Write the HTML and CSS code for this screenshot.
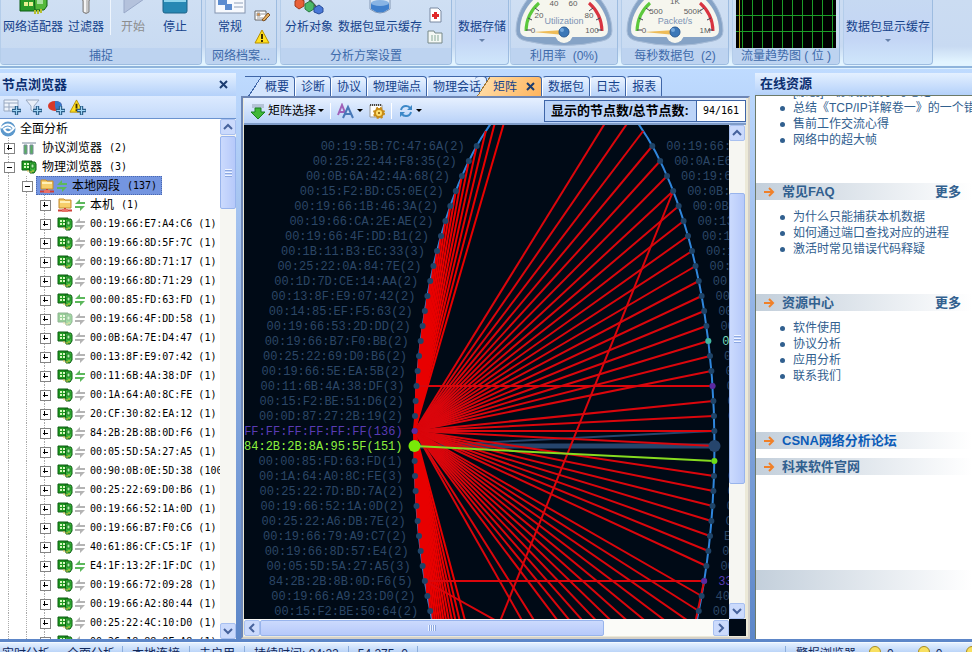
FILE: index.html
```html
<!DOCTYPE html>
<html lang="zh-CN">
<head>
<meta charset="utf-8">
<title>网络分析系统</title>
<link rel="stylesheet" href="styles.css">
</head>
<body>
<svg class="sprites" aria-hidden="true">
  <symbol id="i-nic" viewBox="0 0 16 16">
    <path d="M1 2h10v9H1z" fill="#1f9a1f" stroke="#0c5c12"/>
    <path d="M8 3h6l1 2v6l-2 3H9z" fill="#3cb83c" stroke="#0c5c12"/>
    <path d="M3 4h2v2H3zM3 7h2v2H3zM6 4h2v2H6zM6 7h2v2H6z" fill="#d8f8c0"/>
    <path d="M10 5h3v4h-3z" fill="#b8eeb0" stroke="#117a18"/>
    <path d="M7 11v2M10 12v2M12 11v2" stroke="#e0c040"/>
  </symbol>
  <symbol id="i-arrows" viewBox="0 0 10 14">
    <path d="M0 6l5-5v3h5v2z"/>
    <path d="M10 8l-5 5v-3H0V8z"/>
  </symbol>
  <symbol id="i-folder" viewBox="0 0 16 16">
    <path d="M2 2h5l1 1h6v8H2z" fill="#f6cf6a" stroke="#c48a2c"/>
    <path d="M3 5h10" stroke="#fff0b8" stroke-width="2"/>
    <path d="M1 13.5h14M8 11v3" stroke="#d04038" stroke-width="2"/>
    <path d="M5 12h6v3H5z" fill="#e87068"/>
  </symbol>
  <symbol id="i-plus" viewBox="0 0 8 8">
    <path d="M3 0h2v3h3v2H5v3H3V5H0V3h3z" fill="#9fd4f4" stroke="#2a5f8a"/>
  </symbol>
  <symbol id="i-go" viewBox="0 0 12 12">
    <path d="M1 6h9M6 2l4 4-4 4" fill="none" stroke="#f08028" stroke-width="2"/>
  </symbol>
  <symbol id="i-warn" viewBox="0 0 16 16">
    <path d="M8 1l7 13H1z" fill="#ffe020" stroke="#b89000" stroke-linejoin="round"/>
    <path d="M7 5h2v5H7zM7 11h2v2H7z" fill="#403000"/>
  </symbol>
  <symbol id="i-chev" viewBox="0 0 10 10">
    <path d="M1 7l4-4 4 4" fill="none" stroke="#46629c" stroke-width="2"/>
  </symbol>
  <symbol id="i-x" viewBox="0 0 10 10">
    <path d="M1 1l7 7M8 1L1 8" stroke="#1c3c70" stroke-width="2"/>
  </symbol>
  <symbol id="gauge-face" viewBox="0 0 98 47">
    <path d="M1 31C1 14 10 0 20-8H78C88 0 97 14 97 31Q97 39 87 41Q49 50 11 41Q1 39 1 31Z" fill="#86a3c6" stroke="#a8bdd8"/>
    <path d="M5 30C5 16 13 3 23-4H75C85 3 93 16 93 30Q93 36 86 37H12Q5 36 5 30Z" fill="#f6f6ee"/>
    <path d="M11 31A38 38 0 0 1 24 3" fill="none" stroke="#5cc83c" stroke-width="3"/>
    <path d="M74 3A38 38 0 0 1 87 31" fill="none" stroke="#d83440" stroke-width="3"/>
    <path d="M11 30h5M13 18l4 2M20 8l4 3M87 30h-5M85 18l-4 2M78 8l-4 3" stroke="#445" stroke-width="1"/>
    <circle cx="49" cy="34" r="9" fill="#f6f6ee"/>
    <path d="M18 32l31-2v5z" fill="#eebc58"/>
    <circle cx="49" cy="32" r="5" fill="#3c78b8" stroke="#2a5a94"/>
    <circle cx="47" cy="30" r="2" fill="#74a8dc"/>
  </symbol>
</svg>

<header class="ribbon">
  <section class="group g-capture">
    <div class="tools">
      <button class="tool"><svg width="32" height="32" viewBox="0 0 32 32"><path d="M3 2h20v26H3z" fill="#2a9a28" stroke="#0c5c12"/><path d="M17 4h10l3 4v15l-3 4H18z" fill="#55b83c" stroke="#0c5c12"/><path d="M7 19h4v4H7zM12 19h4v4h-4zM7 13h4v4H7z" fill="#e8f090"/><path d="M18 27v4M21 27v4M24 26v4" stroke="#b8c030" stroke-width="2"/><path d="M20 12h6v9h-6z" fill="#a8e0a0"/></svg>网络适配器</button>
      <button class="tool"><svg width="32" height="32" viewBox="0 0 32 32"><path d="M3 2h26L19 18v11q-3 3-6 0V18z" fill="#c8c8c8" stroke="#808080"/><path d="M15 17v12" stroke="#f4f4f4" stroke-width="2"/></svg>过滤器</button>
      <span class="divider"></span>
      <button class="tool off"><svg width="32" height="32" viewBox="0 0 32 32"><path d="M7 0v30L30 14z" fill="#b4c2dc" stroke="#98a8c8"/></svg>开始</button>
      <button class="tool"><svg width="32" height="32" viewBox="0 0 32 32"><rect x="4" y="4" width="24" height="26" rx="2" fill="#2788b4" stroke="#1c6288"/><path d="M5 5h22v14H5z" fill="#8fd4ec"/></svg>停止</button>
    </div>
    <h2>捕捉</h2>
  </section>
  <section class="group g-profile">
    <div class="tools">
      <button class="tool"><svg width="32" height="32" viewBox="0 0 32 32"><rect x="1" y="1" width="30" height="29" fill="#f6f9fe" stroke="#8494b0"/><path d="M4 16h9v6H4zM11 21h7v6h-7z" fill="#5c8cd0"/><path d="M20 16h9M20 20h9M20 24h9" stroke="#90a0b8"/></svg>常规</button>
      <div class="stack">
        <button aria-label="编辑"><svg width="16" height="16" viewBox="0 0 16 16"><path d="M1 4h11v9H1z" fill="#fff" stroke="#666"/><path d="M3 6h3v3H3zM7 7h4M3 11h6" fill="#e09040" stroke="#999"/><path d="M8 13l6-7 2 2-6 6z" fill="#e4b060" stroke="#805020"/></svg></button>
        <button aria-label="警报"><svg width="16" height="16"><use href="#i-warn"/></svg></button>
      </div>
    </div>
    <h2>网络档案...</h2>
  </section>
  <section class="group g-settings">
    <div class="tools">
      <button class="tool"><svg width="32" height="32" viewBox="0 0 32 32"><path d="M8 19L24 5M24 25L8 7" stroke="#555" stroke-width="2"/><path d="M2 18l5-3 4 3v5l-5 3-4-3z" fill="#e86038" stroke="#a03818"/><path d="M12 21l5-3 4 3v5l-5 3-4-3z" fill="#4cb868" stroke="#287840"/><path d="M21 25l5-3 4 3v4l-4 2-5-2z" fill="#4878d8" stroke="#284c98"/><path d="M14 8l5-3 4 3v5l-5 3-4-3z" fill="#e04848" stroke="#902020"/></svg>分析对象</button>
      <button class="tool"><svg width="32" height="32" viewBox="0 0 32 32"><path d="M6 2v24q10 8 20 0V2z" fill="#d8e6f4" stroke="#8498b4"/><path d="M7 20v6q9 7 18 0v-6z" fill="#4080cc"/><ellipse cx="16" cy="20" rx="9" ry="3" fill="#88b4e4"/></svg>数据包显示缓存</button>
      <div class="stack">
        <button aria-label="诊断设置"><svg width="16" height="16" viewBox="0 0 16 16"><path d="M3 1h8l3 3v11H3z" fill="#fff" stroke="#7888a0"/><path d="M7 5h3v2h2v3h-2v2H7v-2H5V7h2z" fill="#e02828"/></svg></button>
        <button aria-label="视图"><svg width="16" height="16" viewBox="0 0 16 16"><path d="M1 2h6l1 2h7v10H1z" fill="#f4f8f4" stroke="#788"/><path d="M4 7h9M4 9h9M4 11h9" stroke="#8a9" stroke-dasharray="2 1"/></svg></button>
      </div>
    </div>
    <h2>分析方案设置</h2>
  </section>
  <button class="group big g-store"><span>数据存储</span><i class="caret"></i></button>
  <section class="group g-meter">
    <svg class="gauge" width="98" height="47" viewBox="0 0 98 47"><use href="#gauge-face"/><text x="39" y="6">40</text><text x="58" y="6">60</text><text x="24" y="18">20</text><text x="74" y="18">80</text><text x="18" y="33">0</text><text x="77" y="33">100</text><text class="name" x="49" y="24">Utilization</text></svg>
    <h2>利用率&nbsp; (0%)</h2>
  </section>
  <section class="group g-meter">
    <svg class="gauge" width="98" height="47" viewBox="0 0 98 47"><use href="#gauge-face"/><text x="49" y="4">1K</text><text x="30" y="14">500</text><text x="67" y="14">500K</text><text x="18" y="33">0</text><text x="79" y="33">1M</text><text class="name" x="49" y="24">Packet/s</text></svg>
    <h2>每秒数据包&nbsp; (2)</h2>
  </section>
  <section class="group g-meter">
    <svg class="trend" width="100" height="48" viewBox="0 0 100 48"><path d="M0 0h100v48H0z" fill="#000"/><path d="M0 15.5h100M0 31.5h100M16.500 0v48M26.500 0v48M36.500 0v48M46.500 0v48M56.500 0v48M66.500 0v48M76.500 0v48M86.500 0v48M96.500 0v48M6.500 0v48" stroke="#1c9c28"/><path d="M3.500 0v48" stroke="#b8a020"/></svg>
    <h2>流量趋势图 ( 位 )</h2>
  </section>
  <button class="group big g-buffer"><span>数据包显示缓存</span><i class="caret"></i></button>
</header>

<main class="work">
  <aside class="panel nodes">
    <div class="head"><h1>节点浏览器</h1><button aria-label="关闭"><svg width="10" height="10"><use href="#i-x"/></svg></button></div>
    <div class="bar">
      <button aria-label="添加图表"><svg width="18" height="16" viewBox="0 0 18 16"><path d="M1 1h14v11H1zM1 4h14M6 4v8M1 8h14" fill="#eef4fc" stroke="#98a8c0"/><use href="#i-plus" x="9" y="7" width="9" height="9"/></svg></button>
      <button aria-label="添加过滤器"><svg width="18" height="16" viewBox="0 0 18 16"><path d="M1 1h13L9 7v6l-3-2V7z" fill="#e8eef8" stroke="#98a8c0"/><use href="#i-plus" x="8" y="7" width="9" height="9"/></svg></button>
      <button aria-label="添加图形"><svg width="18" height="16" viewBox="0 0 18 16"><ellipse cx="8" cy="7" rx="7" ry="5" fill="#d83828"/><path d="M8 7V2q7 0 7 5 0 5-6 5z" fill="#3878c8"/><use href="#i-plus" x="9" y="7" width="9" height="9"/></svg></button>
      <button aria-label="添加警报"><svg width="18" height="16" viewBox="0 0 18 16"><use href="#i-warn" width="15" height="15"/><use href="#i-plus" x="8" y="7" width="9" height="9"/></svg></button>
    </div>
    <div class="scroll">
      <ul class="tree" id="tree">
        <li class="root"><svg width="16" height="16" viewBox="0 0 16 16"><circle cx="8" cy="8" r="7.500" fill="#5c98cc"/><path d="M1 7q7-7 13 0-6 8-10 1 4-3 7 0" fill="none" stroke="#fff" stroke-width="2"/></svg>全面分析</li>
        <li><b class="box">+</b><svg class="ic" width="16" height="16" viewBox="0 0 16 16"><path d="M1 3h14M3 5h3v9H3zM9 5h3v9H9z" fill="#58b060" stroke="#789"/></svg><span>协议浏览器</span><code>(2)</code></li>
        <li><b class="box">-</b><svg class="ic" width="16" height="16"><use href="#i-nic"/></svg><span>物理浏览器</span><code>(3)</code></li>
        <li><i class="guide"></i><b class="box">-</b><span class="chosen"><svg width="16" height="16"><use href="#i-folder"/></svg><svg class="low" width="10" height="14"><use href="#i-arrows"/></svg><span>本地网段</span><code>(137)</code></span></li>
        <li><i class="guide"></i><i class="guide"></i><b class="box">+</b><svg class="ic" width="16" height="16"><use href="#i-folder"/></svg><svg class="ar both" width="10" height="14"><use href="#i-arrows"/></svg><span>本机</span><code>(1)</code></li>
      </ul>
      <div class="vbar tree-bar"><button aria-label="向上"><svg width="10" height="10"><use href="#i-chev"/></svg></button><div class="track"><i class="thumb"></i></div><button class="flip" aria-label="向下"><svg width="10" height="10"><use href="#i-chev"/></svg></button></div>
    </div>
  </aside>

  <section class="matrix">
    <nav class="tabs">
      <button class="first">概要</button><button>诊断</button><button>协议</button><button>物理端点</button><button>物理会话</button><button class="on">矩阵<svg width="10" height="10"><use href="#i-x"/></svg></button><button>数据包</button><button>日志</button><button>报表</button>
    </nav>
    <div class="frame">
      <div class="toolbar">
        <button><svg width="16" height="16" viewBox="0 0 16 16"><path d="M2 2h12M2 4h12" stroke="#90a0b0"/><path d="M5 5h6v4h4l-7 7-7-7h4z" fill="#40b838" stroke="#188020"/></svg>矩阵选择<i class="caret"></i></button>
        <span class="sep"></span>
        <button aria-label="字体"><svg width="18" height="16" viewBox="0 0 18 16"><path d="M1 12L5 2l4 10M2 9h6" fill="none" stroke="#a060b8" stroke-width="2"/><path d="M6 15l5-11 5 11M8 11h7" fill="none" stroke="#4878b8" stroke-width="2"/></svg><i class="caret"></i></button>
        <button aria-label="设置"><svg width="16" height="16" viewBox="0 0 16 16"><path d="M1 2h12v12H1z" fill="#fff" stroke="#999"/><path d="M1 2h12" stroke="#444" stroke-width="2" stroke-dasharray="1 1"/><circle cx="10" cy="10" r="4" fill="#ffe070" stroke="#c88c18" stroke-width="2" /><circle cx="10" cy="10" r="5" fill="none" stroke="#c88c18" stroke-width="2" stroke-dasharray="2 2"/><circle cx="10" cy="10" r="1" fill="#805000"/></svg></button>
        <span class="sep"></span>
        <button aria-label="刷新"><svg width="16" height="16" viewBox="0 0 16 16"><path d="M3 7q1-4 5-4 3 0 4 2M13 9q-1 4-5 4-3 0-4-2" fill="none" stroke="#3c88c8" stroke-width="2"/><path d="M14 2v5H9zM2 14V9h5z" fill="#3c88c8"/></svg><i class="caret"></i></button>
        <label class="count"><b>显示的节点数/总节点数:</b><output>94/161</output></label>
      </div>
      <div class="view">
        <svg id="plot" class="plot" role="img" aria-label="矩阵"></svg>
        <div class="vbar plot-bar"><button aria-label="向上"><svg width="10" height="10"><use href="#i-chev"/></svg></button><div class="track"><i class="thumb"></i></div><button class="flip" aria-label="向下"><svg width="10" height="10"><use href="#i-chev"/></svg></button></div>
        <div class="hbar"><button class="left" aria-label="向左"><svg width="10" height="10"><use href="#i-chev"/></svg></button><div class="track"><i class="thumb"></i></div><button class="right" aria-label="向右"><svg width="10" height="10"><use href="#i-chev"/></svg></button></div>
        <div class="corner"></div>
      </div>
    </div>
  </section>

  <aside class="panel online">
    <div class="head"><h1>在线资源</h1></div>
    <div class="page">
      <ul class="news"><li><a href="#">[原创]IP协议报文学习笔记</a></li><li><a href="#">总结《TCP/IP详解卷一》的一个错误</a></li><li><a href="#">售前工作交流心得</a></li><li><a href="#">网络中的超大帧</a></li></ul>
      <h2><svg width="12" height="12"><use href="#i-go"/></svg>常见FAQ<a href="#">更多</a></h2>
      <ul class="faq"><li><a href="#">为什么只能捕获本机数据</a></li><li><a href="#">如何通过端口查找对应的进程</a></li><li><a href="#">激活时常见错误代码释疑</a></li></ul>
      <h2><svg width="12" height="12"><use href="#i-go"/></svg>资源中心<a href="#">更多</a></h2>
      <ul class="center"><li><a href="#">软件使用</a></li><li><a href="#">协议分析</a></li><li><a href="#">应用分析</a></li><li><a href="#">联系我们</a></li></ul>
      <h2 class="forum"><svg width="12" height="12"><use href="#i-go"/></svg>CSNA网络分析论坛</h2>
      <h2 class="site"><svg width="12" height="12"><use href="#i-go"/></svg>科来软件官网</h2>
      <div class="blank"></div>
    </div>
  </aside>
</main>

<footer class="status">
  <span class="s1">实时分析</span><span class="s2">全面分析</span><span>本地连接</span><span>未启用</span><span class="s5">持续时间: 04:22</span><span class="s6">54,275&nbsp; 0</span>
  <div class="alarms"><span>警报浏览器</span><i></i>0<i></i>0<i></i></div>
</footer>
<script src="app.js"></script>
</body>
</html>
```

FILE: styles.css
```css
* { box-sizing: border-box; }
html, body { height: 100%; margin: 0; }
body {
  display: flex; flex-direction: column; overflow: hidden;
  background: #bfdbff; color: #000;
  font: 12px/16px "Liberation Sans", "Noto Sans CJK SC", sans-serif;
}
h1, h2, ul { margin: 0; padding: 0; }
ul { list-style: none; }
button { border: 0; padding: 0; background: none; font: inherit; color: inherit; display: flex; align-items: center; }
a { color: inherit; text-decoration: none; }
svg { flex: none; }
.sprites { position: absolute; width: 0; height: 0; }
.caret { width: 0; height: 0; border: 3px solid transparent; border-top-color: #000; border-bottom: 0; }

/* ribbon */
.ribbon {
  flex: none; height: 68px; display: flex; gap: 3px; overflow: hidden;
  background: linear-gradient(#cbdcf2, #c8daf2 70%, #e2f4ff 94%);
  border-bottom: 2px solid #8fb4dc;
}
.group {
  flex: none; height: 65px; display: flex; flex-direction: column; justify-content: flex-end; align-items: stretch;
  border: 1px solid #9dbce0; border-top: 0; border-left-color: #b4cdea; border-radius: 0 0 4px 4px;
  background: linear-gradient(#cfdff3, #c6d9f1);
  overflow: hidden;
}
.group h2 { flex: none; height: 16px; font-weight: 400; font-size: 12px; line-height: 16px; text-align: center; color: #3e6aaa; background: #bdd3f0; white-space: nowrap; }
.tools { flex: none; display: flex; align-items: flex-end; padding-bottom: 13px; height: 66px; }
.tool { flex-direction: column; gap: 4px; color: #15428b; white-space: nowrap; }
.off { color: #8d8d8d; margin-right: 5px; }
.divider { width: 1px; height: 50px; margin: 0 1px; background: #eef5fd; }
.g-capture { width: 202px; }
.g-capture .tools { gap: 5px; padding-left: 2px; }
.g-profile { width: 72px; }
.g-profile .tools { gap: 8px; padding-left: 8px; }
.stack { display: flex; flex-direction: column; gap: 6px; align-self: flex-end; margin-bottom: -10px; }
.g-settings { width: 172px; }
.g-settings .tools { gap: 5px; padding-left: 4px; }
.big { align-items: center; justify-content: flex-start; padding-top: 19px; gap: 4px; color: #15428b; background: linear-gradient(#c6d9f2, #c3d5f5 60%, #cfe6fb); white-space: nowrap; }
.big .caret { border-top-color: #6580a8; }
.g-store { width: 54px; }
.g-meter { width: 108px; }
.g-store + .g-meter { margin-left: -2px; }
.g-buffer { width: 90px; }
.gauge { align-self: center; margin-bottom: 1px; }
.gauge text { font-size: 8px; text-anchor: middle; fill: #5c5c5c; }
.gauge .name { font-size: 9px; fill: #7d93b4; }
.trend { align-self: center; }

/* workspace */
.work { flex: 1; min-height: 0; display: flex; gap: 5px; padding: 4px 0 3px; background: linear-gradient(#bfdbff, #8fb0e4 45%, #5c86c8); border-top: 1px solid #dff2ff; }
.panel { display: flex; flex-direction: column; min-height: 0; }
.head { flex: none; height: 23px; padding: 0 7px 0 2px; display: flex; align-items: center; justify-content: space-between; background: linear-gradient(#e4f0ff, #b4d1fa); }
.head h1 { font-size: 13px; line-height: 20px; color: #0c2f70; }
.nodes { width: 236px; flex: none; }
.bar { flex: none; height: 23px; display: flex; align-items: center; gap: 4px; padding-left: 3px; background: linear-gradient(#dceaff, #c4dafa); border-bottom: 1px solid #6b93cf; }
.scroll { flex: 1; min-height: 0; display: flex; background: #fff; }
.tree { flex: 1; min-width: 0; overflow: hidden; }
.tree li { height: 19px; display: flex; align-items: center; white-space: nowrap; }
.tree code { font: 10px/16px "DejaVu Sans Mono", monospace; }
.tree span + code { margin-left: 7px; }
.root { gap: 4px; }
.guide, .box { flex: none; width: 18px; height: 19px; background: repeating-linear-gradient(#aaa 0 1px, transparent 1px 2px) 8px 0 / 1px 100% no-repeat; }
.box { position: relative; }
.box::before { content: ""; position: absolute; left: 4px; top: 5px; width: 9px; height: 9px; border: 1px solid #848484; background: linear-gradient(#000, #000) center / 5px 1px no-repeat #fff; }
.box.plus::after { content: ""; position: absolute; left: 8px; top: 7px; width: 1px; height: 5px; background: #000; }
.tree .ic { margin: 0 2px 0 3px; }
.tree .ic + span { margin-left: 3px; }
.tree .ar { margin-right: 5px; fill: #b4b4b4; }
.tree .ar + span { margin-left: 0; }
.tree .both, .tree .low { fill: #5cb85c; }
.tree .faint { opacity: .45; }
.chosen { display: flex; align-items: center; gap: 2px; height: 19px; padding: 0 4px 0 2px; background: #7495e0; border: 1px dotted #4a68b0; }
.chosen span { margin-left: 3px; }
.chosen span + code { margin-left: 5px; }

.vbar { flex: none; width: 16px; display: flex; flex-direction: column; background: #f6f6f2; }
.vbar button, .hbar button { flex: none; width: 16px; height: 16px; justify-content: center; border: 1px solid #a8c0f0; border-radius: 2px; background: #cbdafc; }
.flip svg { transform: rotate(180deg); }
.left svg { transform: rotate(270deg); }
.right svg { transform: rotate(90deg); }
.track { flex: 1; display: flex; }
.vbar .track { flex-direction: column; }
.thumb { background: repeating-linear-gradient(#eef4ff 0 1px, #8ca8e0 1px 2px, transparent 2px 3px) center / 7px 8px no-repeat, linear-gradient(90deg, #cbdafd, #b6c9fa); border: 1px solid #98b4ec; border-radius: 2px; }
.tree-bar .thumb { height: 15%; margin-top: 1px; }
.plot-bar .track { padding-top: 52px; }
.plot-bar .thumb { height: 71%; }

/* matrix */
.matrix { flex: 1; min-width: 0; display: flex; flex-direction: column; }
.tabs { flex: none; height: 23px; padding: 3px 0 0 4px; display: flex; }
.tabs button { flex: none; height: 20px; padding: 0 5px; border: 1px solid #3f66a8; border-left-color: #fff; border-bottom: 0; border-radius: 4px 4px 0 0; color: #15428b; background: linear-gradient(#eaf3ff, #b8d3fa); white-space: nowrap; }
.tabs .first { padding-left: 20px; background: linear-gradient(123deg, transparent 13px, #3f66a8 13px 14px, #d4e5fd 14px); border-left: 0; border-top-left-radius: 0; }
.tabs .on { margin-left: -12px; padding: 0 5px 0 18px; gap: 9px; border-left: 0; background: linear-gradient(123deg, transparent 12px, #a07838 12px 13px, #ffd9a0 13px, #ffb45c); }
.frame { flex: 1; min-height: 0; display: flex; flex-direction: column; border: 2px solid #6d86b4; border-right-color: #d4d0c8; border-bottom-color: #d4d0c8; background: #ece9d8; padding: 0 2px 1px 1px; }
.toolbar { flex: none; height: 27px; display: flex; align-items: center; gap: 6px; padding-left: 6px; background: linear-gradient(#e6f0ff, #b9d2f8); border-bottom: 2px solid #7f9cc8; }
.toolbar button { gap: 2px; white-space: nowrap; }
.toolbar button .caret { margin-left: 4px; }
.toolbar button svg + .caret { margin-left: 0; }
.sep { width: 1px; height: 16px; background: #fff; }
.count { margin-left: auto; height: 22px; display: flex; align-items: center; border: 1px solid #3f66a8; background: #bcd4f8; white-space: nowrap; }
.count b { padding: 0 7px 0 6px; font-size: 13px; }
.count output { height: 20px; padding: 0 6px; border-left: 1px solid #3f66a8; background: #fff; font: 10px/20px "DejaVu Sans Mono", monospace; }
.view { flex: 1; min-height: 0; display: grid; grid-template: 1fr 17px / 1fr 17px; }
.plot { width: 100%; height: 100%; min-height: 0; overflow: hidden; background: #000a16; }
.plot text { font: 12px "Liberation Mono", monospace; fill: #2c4767; }
.plot .arc { fill: none; stroke: #2f86dc; stroke-width: 2; }
.plot .link { stroke: #da060c; stroke-width: 2; }
.plot .near { stroke: #e80000; stroke-width: 2; }
.plot .node { fill: #1f4468; }
.hbar { display: flex; background: #fbfbf8; padding: 1px 0 0; }
.hbar .thumb { width: 76%; height: 16px; background: repeating-linear-gradient(90deg, #eef4ff 0 1px, #8ca8e0 1px 2px) center / 8px 6px no-repeat, linear-gradient(#cbdafd, #b6c9fa); }
.corner { background: #000a16; }

/* online resources */
.online { width: 217px; flex: none; color: #31608f; }
.online .head { height: 22px; padding-left: 5px; }
.page { flex: 1; min-height: 0; overflow: hidden; background: #fff; border: 1px solid #6d7a68; border-width: 1px 0 0 1px; }
.page ul { padding-left: 37px; }
.page li { height: 16px; white-space: nowrap; display: flex; align-items: center; }
.page li::before { content: ""; flex: none; width: 5px; height: 5px; margin: 0 8px 0 -13px; border-radius: 50%; background: #31608f; }
.news { margin-top: -12px; height: 99px; }
.faq { height: 94px; padding-top: 9px; }
.center { height: 121px; padding-top: 9px; }
.page h2 { height: 17px; display: flex; align-items: center; padding: 0 11px 0 7px; font-size: 13px; line-height: 17px; background: linear-gradient(90deg, #c3cfdb, #fff); white-space: nowrap; }
.page h2 svg { margin-right: 7px; }
.page h2 a { margin-left: auto; }
.page .forum { color: #0c5cb8; margin-bottom: 9px; }
.blank { height: 20px; margin-top: 95px; background: linear-gradient(90deg, #c3cfdb, #fff); }

/* status bar */
.status { flex: none; height: 10px; padding-top: 3px; display: flex; align-items: flex-start; overflow: hidden; background: linear-gradient(#e4f0ff, #bcd5f8); color: #10285c; white-space: nowrap; border-top: 1px solid #f4faff; }
.status > span { padding: 0 9px; border-right: 1px solid #8caedc; }
.status .s1 { padding: 0 9px 0 2px; border: 0; }
.status .s2 { padding: 0 7px 0 8px; }
.alarms { margin-left: auto; width: 187px; padding-left: 10px; display: flex; gap: 6px; border-left: 1px solid #8caedc; }
.alarms span { margin-right: 7px; }
.alarms i { flex: none; width: 12px; height: 12px; border-radius: 50%; border: 1px solid #a88c20; background: #f8e060; }
.alarms i ~ i { margin-left: 18px; }
```

FILE: app.js
```js
// Address rows of the node tree: [address, arrow state, icon state, count]
const hosts = [
  ['00:19:66:E7:A4:C6'], ['00:19:66:8D:5F:7C'], ['00:19:66:8D:71:17'], ['00:19:66:8D:71:29'],
  ['00:00:85:FD:63:FD', 'both'], ['00:19:66:4F:DD:58', '', 'faint'], ['00:0B:6A:7E:D4:47'],
  ['00:13:8F:E9:07:42'], ['00:11:6B:4A:38:DF', 'both'], ['00:1A:64:A0:8C:FE'], ['20:CF:30:82:EA:12'],
  ['84:2B:2B:8B:0D:F6'], ['00:05:5D:5A:27:A5'], ['00:90:0B:0E:5D:38', '', '', '100'],
  ['00:25:22:69:D0:B6'], ['00:19:66:52:1A:0D'], ['00:19:66:B7:F0:C6'], ['40:61:86:CF:C5:1F'],
  ['E4:1F:13:2F:1F:DC', 'both'], ['00:19:66:72:09:28'], ['00:19:66:A2:80:44'],
  ['00:25:22:4C:10:D0'], ['00:26:18:88:8F:A8']
];
const tree = document.getElementById('tree');
tree.insertAdjacentHTML('beforeend', hosts.map(([mac, arrows = '', icon = '', n = '1']) =>
  `<li><i class="guide"></i><i class="guide"></i><b class="box">+</b>` +
  `<svg class="ic ${icon}" width="16" height="16"><use href="#i-nic"/></svg>` +
  `<svg class="ar ${arrows}" width="10" height="14"><use href="#i-arrows"/></svg>` +
  `<code>${mac} (${n})</code></li>`).join(''));
tree.querySelectorAll('.box').forEach(b => {
  if (b.textContent === '+') b.classList.add('plus');
  b.textContent = '';
});

// Matrix: nodes sit on an ellipse, one every 15px of height
const left = `00:19:5B:7C:47:6A(2) 00:25:22:44:F8:35(2) 00:0B:6A:42:4A:68(2) 00:15:F2:BD:C5:0E(2)
00:19:66:1B:46:3A(2) 00:19:66:CA:2E:AE(2) 00:19:66:4F:DD:B1(2) 00:1B:11:B3:EC:33(3)
00:25:22:0A:84:7E(2) 00:1D:7D:CE:14:AA(2) 00:13:8F:E9:07:42(2) 00:14:85:EF:F5:63(2)
00:19:66:53:2D:DD(2) 00:19:66:B7:F0:BB(2) 00:25:22:69:D0:B6(2) 00:19:66:5E:EA:5B(2)
00:11:6B:4A:38:DF(3) 00:15:F2:BE:51:D6(2) 00:0D:87:27:2B:19(2) FF:FF:FF:FF:FF:FF(136)
84:2B:2B:8A:95:5F(151) 00:00:85:FD:63:FD(1) 00:1A:64:A0:8C:FE(3) 00:25:22:7D:BD:7A(2)
00:19:66:52:1A:0D(2) 00:25:22:A6:DB:7E(2) 00:19:66:79:A9:C7(2) 00:19:66:8D:57:E4(2)
00:05:5D:5A:27:A5(3) 84:2B:2B:8B:0D:F6(5) 00:19:66:A9:23:D0(2) 00:15:F2:BE:50:64(2)`.split(/\s+/);
const right = ['00:19:66:', '00:0A:E6', '00:19:6', '00:0B:', '00:0B', '00:13', '00:1', '00:1', '00:1', '00:',
  '00', '00', '00', '0', '0', '0', '0', '0', '0', '', '', '0', '0', '0', '0', 'C', 'E', '0', '00', '33', '40', '00'];
const cx = 320.5, cy = 321, rx = 150, ry = 370;
const node = (row, side) => {
  const y = 21 + row * 15;
  return [cx + side * rx * Math.sqrt(1 - ((y - cy) / ry) ** 2), y];
};
const line = (a, b, cls, extra = '') =>
  `<line class="${cls}" x1="${a[0]}" y1="${a[1]}" x2="${b[0]}" y2="${b[1]}" ${extra}/>`;
const dot = (p, r, fill) => `<circle class="node" cx="${p[0]}" cy="${p[1]}" r="${r}" ${fill ? `style="fill:${fill}"` : ''}/>`;
const hub = node(19, -1), host = node(20, -1);
let art = `<ellipse class="arc" cx="${cx}" cy="${cy}" rx="${rx}" ry="${ry}"/>`;
art += line(host, node(20, 1), '', 'stroke="#26456c" stroke-width="5"');
art += line(host, node(19, 1), '', 'stroke="#26456c" stroke-width="2"');
for (let row = -3; row <= 43; row++) {
  if (row !== 19) art += line(hub, node(row, -1), 'near');
  if (![16, 21, 29, 41].includes(row)) art += line(hub, node(row, 1), 'link');
}
art += line(node(16, -1), node(16, 1), 'link');
art += line(node(29, -1), node(29, 1), 'link');
art += line(node(3, 1), node(38, -1), 'link');
art += line(node(29, -1), node(38, 1), 'link');
art += line(node(29, 1), node(34, 1), 'link');
art += line(host, node(21, 1), '', 'stroke="#86dc20" stroke-width="2"');
for (let row = 0; row < left.length; row++) {
  art += dot(node(row, -1), 3) + dot(node(row, 1), 3);
}
art += dot(node(13, 1), 3, '#40b8a0') + dot(node(16, 1), 3, '#5c28a0') + dot(node(29, 1), 3, '#5c28a0');
art += dot(node(20, 1), 6, '#26456c') + dot(node(21, 1), 3, '#6cdc18');
art += dot(hub, 3, '#5c28a0') + dot(host, 6, '#78e808');
const inks = { 19: '#5a3cb4', 20: '#8cf03c' };
left.forEach((t, row) => {
  const [x, y] = node(row, -1);
  art += `<text x="${x - 12}" y="${y + 4}" text-anchor="end" ${inks[row] ? `style="fill:${inks[row]}"` : ''}>${t}</text>`;
});
const rinks = { 13: '#70d8b8', 29: '#5a3cb4' };
right.forEach((t, row) => {
  const [x, y] = node(row, 1);
  if (t) art += `<text x="${x + 14}" y="${y + 4}" ${rinks[row] ? `style="fill:${rinks[row]}"` : ''}>${t}</text>`;
});
document.getElementById('plot').innerHTML = art;
```
